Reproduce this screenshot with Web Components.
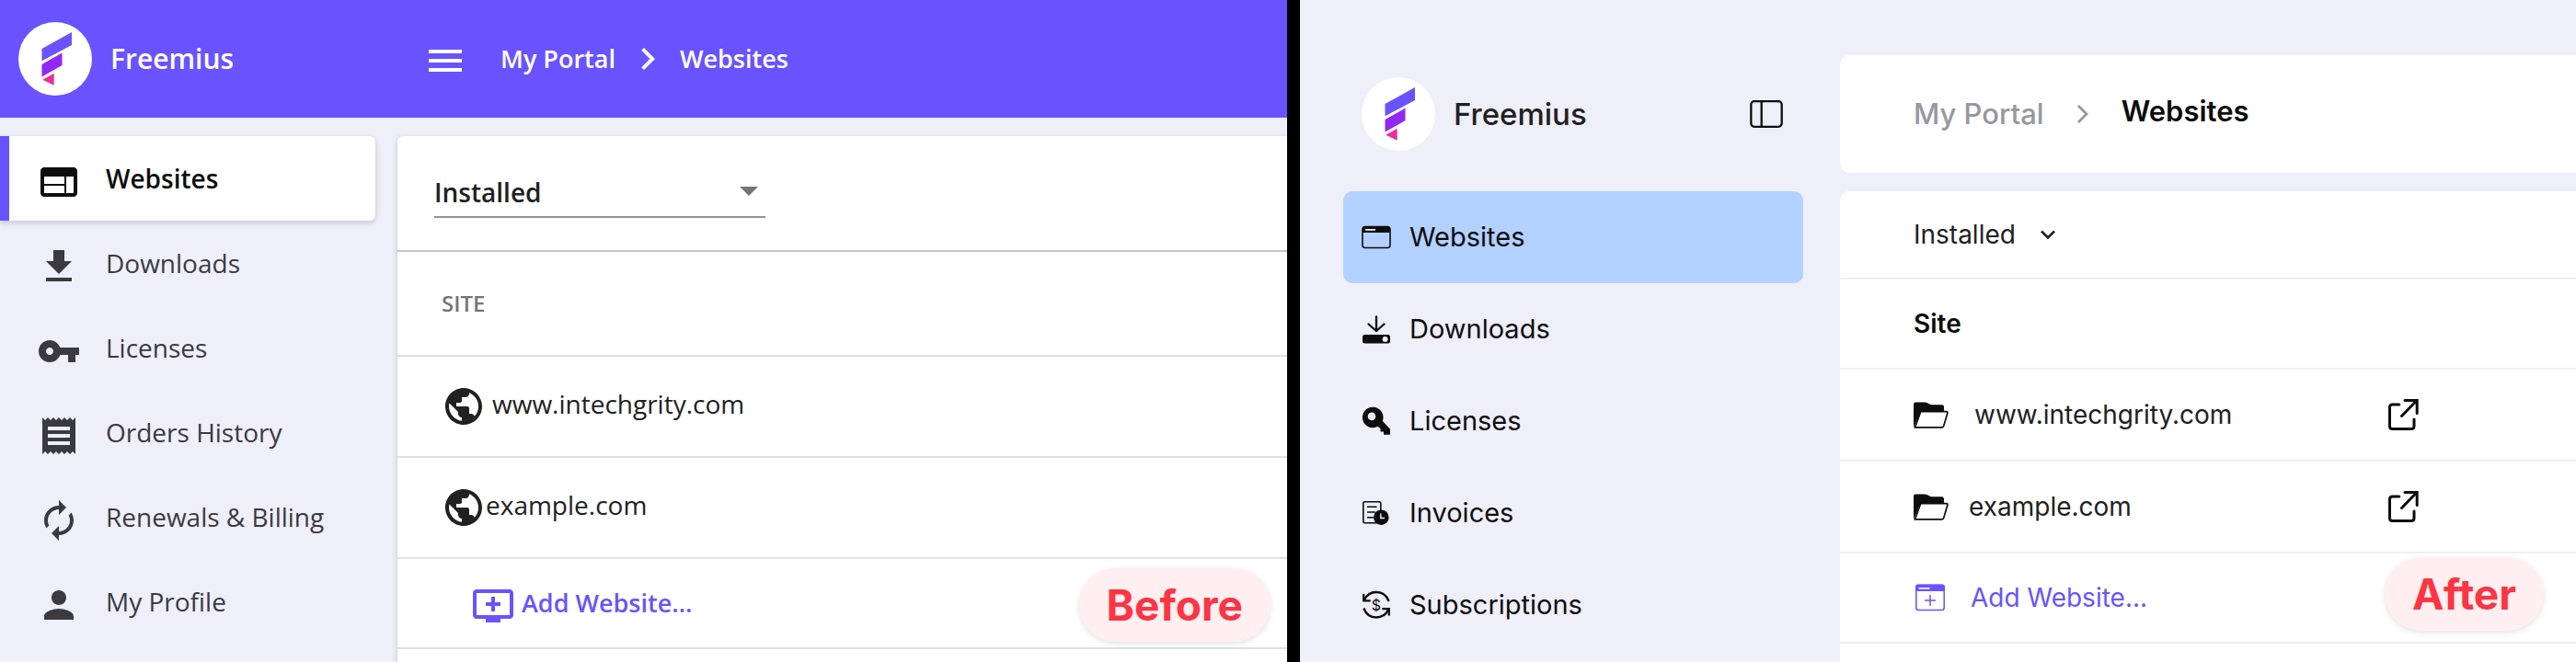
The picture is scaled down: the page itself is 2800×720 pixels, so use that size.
<!DOCTYPE html>
<html lang="en">
<head>
<meta charset="utf-8">
<meta name="viewport" content="width=device-width, initial-scale=1">
<title>Freemius - My Portal</title>
<style>
    body {
        margin: 0;
        background: #000;
    }

    main {
        display: flex;
        gap: 14px;
        min-height: 100vh;
    }
</style>
</head>
<body>
<main>
    <classic-portal>
        <site-badge>Before</site-badge>
    </classic-portal>
    <modern-portal>
        <site-badge>After</site-badge>
    </modern-portal>
</main>

<script>
// every icon: [viewBox width, viewBox height, markup]
const ICONS = {
    web: [24, 24, `<path d="M20 4H4c-1.1 0-1.99.9-1.99 2L2 18c0 1.1.9 2 2 2h16c1.1 0 2-.9 2-2V6c0-1.1-.9-2-2-2zm-5 14H4v-4h11v4zm0-5H4V9h11v4zm5 5h-4V9h4v9z"/>`],
    download: [24, 24, `<path d="M19 9h-4V3H9v6H5l7 7 7-7zM5 18v2h14v-2H5z"/>`],
    key: [24, 24, `<path d="M12.65 10C11.83 7.67 9.61 6 7 6c-3.31 0-6 2.69-6 6s2.69 6 6 6c2.61 0 4.83-1.67 5.65-4H17v4h4v-4h2v-4H12.65zM7 14c-1.1 0-2-.9-2-2s.9-2 2-2 2 .9 2 2-.9 2-2 2z"/>`],
    receipt: [24, 24, `<path d="M18 17H6v-2h12v2zm0-4H6v-2h12v2zm0-4H6V7h12v2zM3 22l1.5-1.5L6 22l1.5-1.5L9 22l1.5-1.5L12 22l1.5-1.5L15 22l1.5-1.5L18 22l1.5-1.5L21 22V2l-1.5 1.5L18 2l-1.5 1.5L15 2l-1.5 1.5L12 2l-1.5 1.5L9 2 7.5 3.5 6 2 4.5 3.5 3 2v20z"/>`],
    renew: [24, 24, `<path d="M12 6v3l4-4-4-4v3c-4.42 0-8 3.58-8 8 0 1.57.46 3.03 1.24 4.26L6.7 14.8c-.45-.83-.7-1.79-.7-2.8 0-3.31 2.69-6 6-6zm6.76 1.74L17.3 9.2c.44.84.7 1.79.7 2.8 0 3.31-2.69 6-6 6v-3l-4 4 4 4v-3c4.42 0 8-3.58 8-8 0-1.57-.46-3.03-1.24-4.26z"/>`],
    person: [24, 24, `<path d="M12 12c2.21 0 4-1.79 4-4s-1.79-4-4-4-4 1.79-4 4 1.79 4 4 4zm0 2c-2.67 0-8 1.34-8 4v2h16v-2c0-2.66-5.33-4-8-4z"/>`],
    globe: [24, 24, `<path d="M12 2C6.48 2 2 6.48 2 12s4.48 10 10 10 10-4.48 10-10S17.52 2 12 2zm-1 17.93c-3.95-.49-7-3.85-7-7.93 0-.62.08-1.21.21-1.79L9 15v1c0 1.1.9 2 2 2v1.93zm6.9-2.54c-.26-.81-1-1.39-1.9-1.39h-1v-3c0-.55-.45-1-1-1H8v-2h2c.55 0 1-.45 1-1V7h2c1.1 0 2-.9 2-2v-.41c2.93 1.19 5 4.06 5 7.41 0 2.08-.8 3.97-2.1 5.39z"/>`],
    addScreen: [24, 24, `<path d="M21 3H3c-1.11 0-2 .89-2 2v12c0 1.1.89 2 2 2h5v2h8v-2h5c1.1 0 1.99-.9 1.99-2L23 5c0-1.11-.9-2-2-2zm0 14H3V5h18v12zm-5-7v2h-3v3h-2v-3H8v-2h3V7h2v3h3z"/>`],
    menu: [24, 24, `<path d="M3 18h18v-2H3v2zm0-5h18v-2H3v2zm0-7v2h18V6H3z"/>`],
    chevron: [24, 24, `<path d="M10 6 8.59 7.41 13.17 12l-4.58 4.59L10 18l6-6z"/>`],

    browser: [32, 32, `<rect x="1" y="4.5" width="30" height="23" rx="3" fill="none" stroke="currentColor" stroke-width="1.6"/><path d="M1 11V7a3 3 0 0 1 3-3h24a3 3 0 0 1 3 3v4z"/><path d="M4.5 7.9h10" stroke="var(--icon-hole)" stroke-width="1.6" stroke-linecap="round"/>`],
    drive: [32, 32, `<path d="M16 2.5V18M7.5 10.5 16 18l8.5-7.5" fill="none" stroke="currentColor" stroke-width="2.3" stroke-linecap="round" stroke-linejoin="round"/><rect x="1" y="22" width="30" height="9.6" rx="2.5"/><circle cx="25.6" cy="26.9" r="2.9" fill="var(--icon-hole)"/>`],
    solidKey: [32, 32, `<path fill-rule="evenodd" d="M12.3.8a11.2 11.2 0 0 1 10.5 15.1L31 24.5v6.3h-7v-3.3h-3.5v-3.5l-3-2.2A11.2 11.2 0 1 1 12.3.8zM11 6.6a4.3 4.3 0 1 0 0 8.6 4.3 4.3 0 0 0 0-8.6z"/>`],
    invoice: [32, 32, `<rect x="1.8" y="3.8" width="19" height="23" rx="1.5" fill="none" stroke="currentColor" stroke-width="1.6"/><path d="M6.5 9.3h9.5M6.5 15h8M6.5 20.7h6" stroke="currentColor" stroke-width="1.5" stroke-linecap="round"/><circle cx="21.3" cy="20.7" r="8.3"/><path d="M20.8 16.5v5h4.2" fill="none" stroke="var(--icon-hole)" stroke-width="1.4"/>`],
    cycle: [32, 32, `<g fill="none" stroke="currentColor" stroke-width="2.3"><path d="M3 10.5C5.5 5 10.5 2 16 2c6.5 0 11.5 4 13.6 10M29 21c-2.5 5.5-7.5 8.5-13 8.5-6.5 0-11.5-4-13.6-10"/><path d="M2.2 4v7.3h7.5M29.8 27.5v-7.3h-7.5"/></g><text x="16" y="21.5" font-size="16" text-anchor="middle">$</text>`],
    panel: [36, 30, `<g fill="none" stroke="currentColor" stroke-width="2.3"><rect x="1.3" y="1.2" width="33.4" height="27.6" rx="3.5"/><path d="M12.7 1v28"/></g>`],
    crumb: [24, 24, `<path d="m7 3 9 9-9 9" fill="none" stroke="currentColor" stroke-width="2.8"/>`],
    caret: [24, 24, `<path d="m5 8.5 7 7 7-7" fill="none" stroke="currentColor" stroke-width="2.6"/>`],
    triangle: [20, 10, `<path d="M0 0h20L10 10z"/>`],
    folder: [38, 29, `<path d="M0 28V2.5Q0 .5 2 .5h10q2.5 0 4.5 1.5T21 3.3h9.5q2.5 0 2.5 2.5V12H7z"/><path d="M7.7 10.6h27.8q1.8 0 1.3 1.8l-4 13.6q-.6 1.9-2.5 1.9H1.5z" fill="#fff" stroke="currentColor" stroke-width="1.7"/>`],
    addBrowser: [32, 30, `<rect x=".8" y="1.5" width="30.4" height="27" rx="2.5" fill="none" stroke="currentColor" stroke-width="1.5"/><path d="M0 8V3.5a3 3 0 0 1 3-3h26a3 3 0 0 1 3 3V8z"/><path d="M3.5 4.9h12" stroke="#fff" stroke-width="1.6"/><path d="M16 12v12M10 18h12" stroke="currentColor" stroke-width="1.5"/>`],
    external: [34, 34, `<g fill="none" stroke="currentColor" stroke-width="3" stroke-linecap="round"><path d="M11.8 6H4.5q-3 0-3 3v20.5q0 3 3 3H25q3 0 3-3V22"/><path d="M14.5 18.5 30.5 2M18 1.6h13.2V15.5"/></g>`]
};

const NAV_CLASSIC = [
    ["web", "Websites"], ["download", "Downloads"], ["key", "Licenses"],
    ["receipt", "Orders History"], ["renew", "Renewals & Billing"], ["person", "My Profile"]
];

const NAV_MODERN = [
    ["browser", "Websites"], ["drive", "Downloads"], ["solidKey", "Licenses"],
    ["invoice", "Invoices"], ["cycle", "Subscriptions"]
];

const navItems = (items) => items.map(([icon, label], i) =>
    `<nav-link icon="${icon}" ${i === 0 ? "active" : ""}>${label.replace("&", "&amp;")}</nav-link>`).join("");

/** base class: renders template() in an open shadow root once the element is connected */
class PortalElement extends HTMLElement {
    constructor () {
        super ();
        this.attachShadow ({ mode: "open" });
    }

    connectedCallback () {
        this.shadowRoot.innerHTML = this.template ();
    }
}

/** <svg-icon name="web"> - sized by --icon-width, drawn in the current colour */
class SvgIcon extends PortalElement {
    template () {
        const [w, h, markup] = ICONS[this.getAttribute ("name")];
        return `
        <style>
            :host { display: inline-flex; flex: none; width: var(--icon-width, 48px); }
            svg { display: block; width: 100%; fill: currentColor; }
        </style>
        <svg viewBox="0 0 ${w} ${h}" aria-hidden="true">${markup}</svg>`;
    }
}

/** round logo with the product name slotted beside it */
class BrandMark extends PortalElement {
    template () {
        return `
        <style>
            :host { display: flex; align-items: center; gap: 20px; }
            svg { flex: none; width: 80px; height: 80px; }
        </style>
        <svg viewBox="0 0 80 80" aria-hidden="true">
            <circle cx="40" cy="40" r="40" fill="#fff"/>
            <path fill="#6953ff" d="M25.5 29 58 11v14L25.5 42.3z"/>
            <path fill="#9029f5" d="m25.5 46 22-12.4v13.5l-22 12.3z"/>
            <path fill="#ec2d9b" d="m26.2 62.7 12.5-7v13z"/>
        </svg>
        <slot></slot>`;
    }
}

/** one link of a side menu */
class NavLink extends PortalElement {
    template () {
        const active = this.hasAttribute ("active");
        return `
        <style>
            :host { display: block; }
            a {
                display: flex;
                align-items: center;
                box-sizing: border-box;
                gap: var(--nav-gap);
                height: var(--nav-height);
                padding: var(--nav-padding);
                border-left: var(--nav-edge) solid transparent;
                color: var(--nav-color);
                text-decoration: none;
            }
            a[aria-current] {
                border-left-color: #6953ff;
                border-radius: var(--nav-radius);
                background: var(--nav-active);
                box-shadow: var(--nav-shadow);
                color: #0d0d0d;
                font-weight: var(--nav-weight);
            }
            svg-icon { margin-top: var(--nav-icon-drop); }
        </style>
        <a href="#" ${active ? 'aria-current="page"' : ""}>
            <svg-icon name="${this.getAttribute ("icon")}"></svg-icon>
            <slot></slot>
        </a>`;
    }
}

/** drop-down for the list filter, with its arrow icon over the right end */
class FilterSelect extends PortalElement {
    template () {
        return `
        <style>
            :host { display: block; }
            label { display: inline-grid; align-items: center; width: var(--select-width); }
            select, svg-icon { grid-area: 1 / 1; }
            select {
                appearance: none;
                box-sizing: border-box;
                width: 100%;
                height: 58px;
                padding: var(--select-padding, 0);
                border: 0;
                border-bottom: var(--select-line, 0);
                border-radius: 0;
                background: none;
                color: #212121;
                font: inherit;
                outline: 0;
            }
            svg-icon {
                justify-self: end;
                margin-right: var(--arrow-end, 0);
                color: var(--arrow-color, #212121);
                pointer-events: none;
            }
        </style>
        <label>
            <select aria-label="Filter websites">
                <option>Installed</option>
                <option>Uninstalled</option>
            </select>
            <svg-icon name="${this.getAttribute ("arrow")}"></svg-icon>
        </label>`;
    }
}

/** red label over a panel's lower right corner */
class SiteBadge extends PortalElement {
    template () {
        return `
        <style>
            :host {
                position: absolute;
                right: var(--badge-right);
                bottom: var(--badge-bottom);
                padding: 0 30px;
                border-radius: 40px;
                background: #ffeff0;
                box-shadow: 0 2px 6px rgba(0, 0, 0, .12);
                color: #fc3545;
                font: 700 46px/80px Inter, "Liberation Sans", sans-serif;
            }
        </style>
        <slot></slot>`;
    }
}

/** the old look: coloured top bar, flat side menu */
class ClassicPortal extends PortalElement {
    template () {
        return `
        <style>
            :host {
                position: relative;
                flex: 1399 1 0;
                display: flex;
                flex-direction: column;
                min-width: 0;
                overflow: hidden;
                background: #efeffa;
                color: #212121;
                font: 400 28px/38px "Open Sans", sans-serif;
                --badge-right: 18px;
                --badge-bottom: 22px;
            }
            header {
                display: flex;
                align-items: center;
                height: 128px;
                background: #6953ff;
                color: #fff;
                font-weight: 600;
            }
            brand-mark {
                box-sizing: border-box;
                width: 460px;
                padding-left: 20px;
                font-size: 30px;
            }
            button { padding: 6px 0 0; border: 0; background: none; color: inherit; }
            .crumbs {
                display: flex;
                align-items: center;
                gap: 11px;
                padding-left: 36px;
                font-size: 27px;
            }
            .crumbs a { color: inherit; text-decoration: none; }
            .body { flex: 1; display: flex; gap: 24px; padding-top: 20px; }
            nav.side {
                flex: none;
                width: 408px;
                --nav-gap: 27px;
                --nav-height: 92px;
                --nav-padding: 0 30px;
                --nav-edge: 10px;
                --nav-color: #3a3a40;
                --nav-radius: 0 6px 6px 0;
                --nav-active: #fff;
                --nav-shadow: 0 2px 6px rgba(60, 60, 100, .25);
                --nav-weight: 600;
                --nav-icon-drop: 7px;
            }
            .card {
                flex: 1;
                border-radius: 6px 0 0 0;
                background: #fff;
                box-shadow: 0 2px 6px rgba(60, 60, 100, .25);
            }
            .tools {
                padding: 31px 40px 35px;
                border-bottom: 2px solid #c5c4d2;
                font-weight: 600;
                --select-width: 360px;
                --select-padding: 3px 0 0;
                --select-line: 2px solid #949494;
            }
            .tools filter-select { --icon-width: 20px; --arrow-end: 8px; --arrow-color: #757575; }
            table { width: 100%; border-collapse: separate; border-spacing: 0; }
            th, td { height: 108px; padding: 0 48px; border-bottom: 2px solid #e0e0e0; text-align: left; }
            th { height: 112px; color: #757575; font-size: 24px; font-weight: 600; }
            .site { display: flex; align-items: center; gap: 7px; }
            .site.own { gap: 0; }
            .site span { padding-bottom: 6px; }
            .add td { height: 96px; }
            .add a {
                display: flex;
                align-items: center;
                gap: 7px;
                padding-left: 32px;
                color: #6953ff;
                font-size: 27px;
                font-weight: 600;
                text-decoration: none;
            }
            .add svg-icon { padding-top: 6px; }
        </style>
        <header>
            <brand-mark>Freemius</brand-mark>
            <button type="button" aria-label="Toggle menu"><svg-icon name="menu"></svg-icon></button>
            <nav class="crumbs" aria-label="Breadcrumb">
                <a href="#">My Portal</a>
                <svg-icon name="chevron"></svg-icon>
                <a href="#" aria-current="page">Websites</a>
            </nav>
        </header>
        <div class="body">
            <nav class="side" aria-label="Portal">${navItems (NAV_CLASSIC)}</nav>
            <section class="card">
                <div class="tools"><filter-select arrow="triangle"></filter-select></div>
                <table>
                    <thead><tr><th scope="col">SITE</th></tr></thead>
                    <tbody>
                        <tr><td><div class="site"><svg-icon name="globe"></svg-icon><span>www.intechgrity.com</span></div></td></tr>
                        <tr><td><div class="site own"><svg-icon name="globe"></svg-icon><span>example.com</span></div></td></tr>
                        <tr class="add"><td><a href="#"><svg-icon name="addScreen"></svg-icon>Add Website...</a></td></tr>
                    </tbody>
                </table>
            </section>
        </div>
        <slot></slot>`;
    }
}

/** the new look: light side menu, breadcrumb in a card of its own */
class ModernPortal extends PortalElement {
    template () {
        return `
        <style>
            :host {
                position: relative;
                flex: 1387 1 0;
                display: flex;
                min-width: 0;
                overflow: hidden;
                background: #efeffa;
                color: #212121;
                font: 400 28px/38px Inter, "Liberation Sans", sans-serif;
                --icon-width: 32px;
                --icon-hole: #efeffa;
                --badge-right: 35px;
                --badge-bottom: 34px;
            }
            aside {
                flex: none;
                box-sizing: border-box;
                width: 587px;
                padding: 84px 40px 0 47px;
                font-size: 29px;
                --nav-gap: 20px;
                --nav-height: 100px;
                --nav-padding: 0 20px;
                --nav-edge: 0;
                --nav-color: #0d0d0d;
                --nav-radius: 10px;
                --nav-active: #b3d1ff;
                --nav-shadow: none;
                --nav-weight: 400;
                --nav-icon-drop: 0;
            }
            .top {
                display: flex;
                justify-content: space-between;
                align-items: center;
                padding: 0 22px 44px 20px;
                font-size: 33px;
                font-weight: 500;
            }
            button { display: flex; padding: 0; border: 0; background: none; color: #0d0d0d; }
            button svg-icon { --icon-width: 36px; }
            .content { flex: 1; display: flex; flex-direction: column; gap: 20px; padding-top: 60px; }
            .card { border-radius: 10px 0 0 10px; background: #fff; }
            .crumbs {
                display: flex;
                align-items: center;
                gap: 30px;
                height: 128px;
                padding: 0 80px;
                color: #9797a0;
                font-size: 31px;
                font-weight: 500;
            }
            .crumbs svg-icon { --icon-width: 24px; }
            .crumbs a { color: inherit; text-decoration: none; }
            .crumbs a[aria-current] { padding-bottom: 6px; color: #0d0d0d; font-weight: 600; }
            .list { flex: 1; border-radius: 10px 0 0 0; }
            .tools { padding: 18px 80px; border-bottom: 2px solid #efeffa; --select-width: 158px; }
            .tools filter-select { --icon-width: 24px; }
            table { width: 100%; border-collapse: separate; border-spacing: 0; }
            th, td { height: 98px; padding: 0 0 0 80px; border-bottom: 2px solid #efeffa; text-align: left; }
            th { height: 96px; color: #0d0d0d; font-weight: 600; }
            th:first-child { width: 436px; }
            .site { display: flex; align-items: center; gap: 28px; --icon-width: 38px; }
            .site.own { gap: 22px; }
            .site svg-icon { color: #0d0d0d; }
            .open { display: flex; color: #0d0d0d; --icon-width: 34px; }
            .add td { height: 96px; padding-left: 82px; }
            .add a {
                display: flex;
                align-items: center;
                gap: 28px;
                color: #6953ff;
                text-decoration: none;
            }
        </style>
        <aside>
            <div class="top">
                <brand-mark>Freemius</brand-mark>
                <button type="button" aria-label="Collapse menu"><svg-icon name="panel"></svg-icon></button>
            </div>
            <nav aria-label="Portal">${navItems (NAV_MODERN)}</nav>
        </aside>
        <div class="content">
            <nav class="card crumbs" aria-label="Breadcrumb">
                <a href="#">My Portal</a>
                <svg-icon name="crumb"></svg-icon>
                <a href="#" aria-current="page">Websites</a>
            </nav>
            <section class="card list">
                <div class="tools"><filter-select arrow="caret"></filter-select></div>
                <table>
                    <thead><tr><th scope="col">Site</th><th></th></tr></thead>
                    <tbody>
                        <tr>
                            <td><div class="site"><svg-icon name="folder"></svg-icon><span>www.intechgrity.com</span></div></td>
                            <td><a class="open" href="#" aria-label="Open www.intechgrity.com"><svg-icon name="external"></svg-icon></a></td>
                        </tr>
                        <tr>
                            <td><div class="site own"><svg-icon name="folder"></svg-icon><span>example.com</span></div></td>
                            <td><a class="open" href="#" aria-label="Open example.com"><svg-icon name="external"></svg-icon></a></td>
                        </tr>
                        <tr class="add"><td colspan="2"><a href="#"><svg-icon name="addBrowser"></svg-icon>Add Website...</a></td></tr>
                    </tbody>
                </table>
            </section>
        </div>
        <slot></slot>`;
    }
}

customElements.define ("svg-icon", SvgIcon);
customElements.define ("brand-mark", BrandMark);
customElements.define ("nav-link", NavLink);
customElements.define ("filter-select", FilterSelect);
customElements.define ("site-badge", SiteBadge);
customElements.define ("classic-portal", ClassicPortal);
customElements.define ("modern-portal", ModernPortal);
</script>
</body>
</html>
